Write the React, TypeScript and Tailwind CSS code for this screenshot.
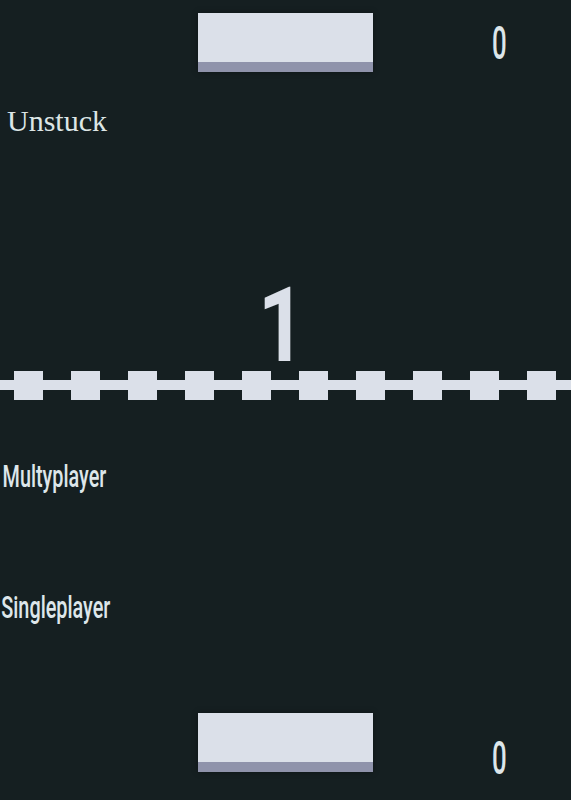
import React from "react";

const squares = Array.from({ length: 10 }, (_, i) => i);

const Paddle = () => (
  <div className="w-[175px] h-[59px] flex flex-col shadow-[0_0_6px_rgba(0,0,0,0.35)]">
    <div className="flex-1 bg-[#dbe0e9]" />
    <div className="h-[10px] bg-[#8f93ab]" />
  </div>
);

const Score = ({ value }: { value: number }) => (
  <span className="block w-[14px] text-[47px] leading-none text-[#dde6ea] font-['Roboto',sans-serif] font-medium scale-x-[0.55] origin-left">
    {value}
  </span>
);

const App = () => {
  return (
    <div className="w-[571px] h-[800px] bg-[#151f21] flex flex-col overflow-hidden">
      {/* top paddle + score */}
      <div className="flex items-start h-[59px] mt-[13px]">
        <div className="ml-[198px]">
          <Paddle />
        </div>
        <div className="ml-[119px] mt-[6px]">
          <Score value={0} />
        </div>
      </div>

      <p className="mt-[34px] pl-[7px] text-[30px] leading-none text-[#dde6e6] font-['Liberation_Serif',serif]">
        Unstuck
      </p>

      <div className="mt-[150px] pl-[258px] h-[84px] text-[103px] leading-[84px] font-bold text-[#dbe0e9] font-['Roboto',sans-serif]">
        <span className="relative -top-[2px] inline-block scale-x-[0.8] origin-left">1</span>
      </div>

      {/* net */}
      <div className="relative h-[30px] flex items-center">
        <div className="absolute left-0 right-0 top-[10px] h-[10px] bg-[#dbe0e9]" />
        <div className="relative flex gap-[28px] pl-[14px]">
          {squares.map((i) => (
            <div key={i} className="w-[29px] h-[29px] bg-[#dbe0e9]" />
          ))}
        </div>
      </div>

      <p className="mt-[61px] pl-[4px] text-[31px] leading-none text-[#dde6ea] font-['Roboto',sans-serif] font-medium scale-x-[0.64] origin-left whitespace-nowrap">
        Multyplayer
      </p>

      <p className="mt-[100px] pl-[2px] text-[31px] leading-none text-[#dde6ea] font-['Roboto',sans-serif] font-medium scale-x-[0.64] origin-left whitespace-nowrap">
        Singleplayer
      </p>

      {/* bottom paddle + score */}
      <div className="mt-auto mb-[28px] flex items-start h-[59px]">
        <div className="ml-[198px]">
          <Paddle />
        </div>
        <div className="ml-[119px] mt-[21px]">
          <Score value={0} />
        </div>
      </div>
    </div>
  );
};

export default App;
